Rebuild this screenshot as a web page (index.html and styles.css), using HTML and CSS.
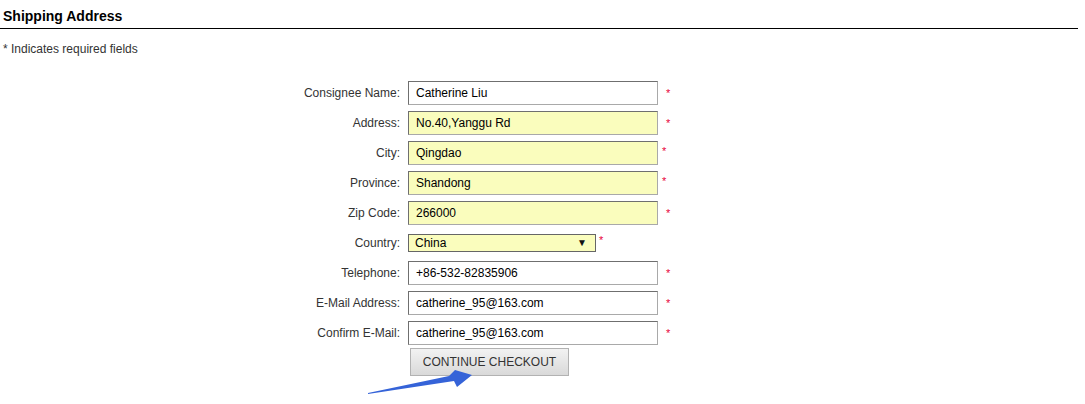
FILE: index.html
```html
<!DOCTYPE html>
<html lang="en">
<head>
    <meta charset="UTF-8">
    <title>Shipping Address</title>
    <link rel="stylesheet" href="styles.css">
</head>
<body>
    <h2 class="title">Shipping Address</h2>
    <p class="note">* Indicates required fields</p>

    <form class="ship-form">
        <label>Consignee Name:</label>
        <input type="text" value="Catherine Liu">
        <span class="req">*</span>

        <label>Address:</label>
        <input type="text" class="filled" value="No.40,Yanggu Rd">
        <span class="req">*</span>

        <label>City:</label>
        <input type="text" class="filled" value="Qingdao">
        <span class="req near">*</span>

        <label>Province:</label>
        <input type="text" class="filled" value="Shandong">
        <span class="req near">*</span>

        <label>Zip Code:</label>
        <input type="text" class="filled" value="266000">
        <span class="req">*</span>

        <label>Country:</label>
        <div class="country">
            <div class="select">China<span class="caret">&#9660;</span></div>
            <span class="req inline">*</span>
        </div>
        <span></span>

        <label>Telephone:</label>
        <input type="text" value="+86-532-82835906">
        <span class="req">*</span>

        <label>E-Mail Address:</label>
        <input type="text" value="catherine_95@163.com">
        <span class="req">*</span>

        <label>Confirm E-Mail:</label>
        <input type="text" value="catherine_95@163.com">
        <span class="req">*</span>

        <span></span>
        <div class="actions">
            <button type="button">CONTINUE CHECKOUT</button>
        </div>
        <span></span>
    </form>

    <svg class="arrow" width="120" height="34" viewBox="0 0 120 34">
        <polygon points="8,28 89,11 95,5 112,10 97,22 94,16 8,29" fill="#3563d8"/>
    </svg>
</body>
</html>
```

FILE: styles.css
```css
body {
    margin: 0;
    font-family: "Liberation Sans", Arial, sans-serif;
    font-size: 12px;
    color: #333;
    background: #fff;
    position: relative;
    width: 1085px;
    height: 404px;
    overflow: hidden;
}

.title {
    margin: 0 7px 0 0;
    padding: 9px 0 5px 3px;
    font-size: 14px;
    font-weight: bold;
    color: #000;
    border-bottom: 1px solid #000;
    line-height: 14px;
}

.note {
    margin: 13px 0 0 3px;
    font-size: 12px;
    line-height: 14px;
}

.ship-form {
    display: grid;
    grid-template-columns: 300px 250px auto;
    column-gap: 8px;
    row-gap: 6px;
    margin: 25px 0 0 100px;
    align-items: center;
}

.ship-form label {
    text-align: right;
    line-height: 24px;
}

.ship-form input {
    box-sizing: border-box;
    width: 250px;
    height: 24px;
    margin: 0;
    padding: 0 7px;
    border: 1px solid #a9a9a9;
    border-top-color: #6f6f6f;
    border-left-color: #6f6f6f;
    font-family: "Liberation Sans", Arial, sans-serif;
    font-size: 12px;
    color: #000;
    background: #fff;
    outline: none;
}

.ship-form input.filled {
    background: #fafdbd;
}

.req {
    color: #e8003a;
    font-size: 11px;
    line-height: 10px;
    align-self: start;
    margin-top: 7px;
}

.req.near {
    margin-left: -4px;
    margin-top: 5px;
}

.country {
    display: flex;
    height: 24px;
    align-items: center;
}

.select {
    box-sizing: border-box;
    width: 188px;
    height: 18px;
    border: 1px solid #666;
    background: #fafdbd;
    color: #000;
    padding: 0 6px;
    display: flex;
    justify-content: space-between;
    align-items: center;
    line-height: 16px;
}

.caret {
    font-size: 10px;
    color: #111;
    margin-right: 2px;
}

.req.inline {
    margin: -6px 0 0 3px;
    align-self: center;
}

.actions {
    margin-top: -3px;
    padding-left: 2px;
}

.actions button {
    width: 159px;
    height: 28px;
    margin: 0;
    border: 1px solid #b2b2b2;
    border-radius: 0;
    background: linear-gradient(#f2f2f2, #d9d9d9);
    font-family: "Liberation Sans", Arial, sans-serif;
    font-size: 12px;
    color: #333;
    cursor: pointer;
}

.arrow {
    position: absolute;
    left: 360px;
    top: 365px;
}
```
